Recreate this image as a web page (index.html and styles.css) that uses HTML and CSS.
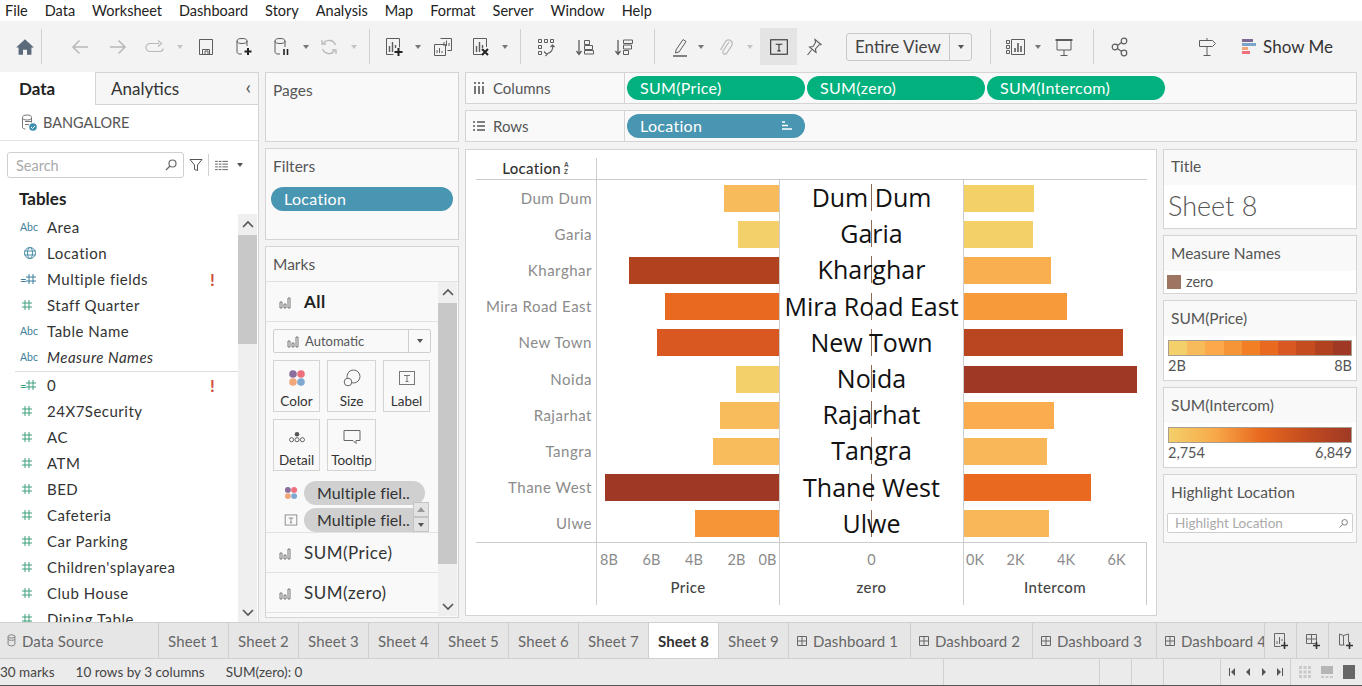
FILE: index.html
```html
<!DOCTYPE html>
<html lang="en">
<head>
  <meta charset="UTF-8">
  <title>Tableau - Sheet 8</title>
  <link rel="stylesheet" href="styles.css">
</head>
<body>
  <!-- shared icons -->
  <svg class="sprite" xmlns="http://www.w3.org/2000/svg">
    <symbol id="i-bars" viewBox="0 0 14 14"><path d="M2 7h2v6H2zM6 9h2v4H6zM10 3h2v10h-2z" fill="none" stroke="currentColor"/></symbol>
    <symbol id="i-hash" viewBox="0 0 14 14"><path d="M5 2v10M9 2v10M2 5h10M2 9h10" stroke="currentColor" fill="none"/></symbol>
    <symbol id="i-search" viewBox="0 0 14 14"><circle cx="8.500" cy="5.500" r="3.500" fill="none" stroke="currentColor" stroke-width="1.200"/><path d="M6 8l-4 4" stroke="currentColor" stroke-width="1.200"/></symbol>
    <symbol id="i-dots" viewBox="0 0 18 18"><circle cx="5" cy="5" r="3.800" fill="#8a6f9c"/><circle cx="13" cy="5" r="3.800" fill="#ef6f7d"/><circle cx="5" cy="13" r="3.800" fill="#f2a77a"/><circle cx="13" cy="13" r="3.800" fill="#7fa8d1"/></symbol>
    <symbol id="i-text" viewBox="0 0 18 18"><rect x="1.500" y="2.500" width="15" height="13" fill="none" stroke="currentColor"/><path d="M6 6.500h6M9 6.500v6M7.500 12.500h3" stroke="currentColor" fill="none"/></symbol>
    <symbol id="i-up" viewBox="0 0 14 14"><path d="M2 9l5-5 5 5" fill="none" stroke="currentColor" stroke-width="1.600"/></symbol>
    <symbol id="i-down" viewBox="0 0 14 14"><path d="M2 5l5 5 5-5" fill="none" stroke="currentColor" stroke-width="1.600"/></symbol>
    <symbol id="i-dash" viewBox="0 0 12 12"><path d="M1.500 1.500h9v9h-9zM6 1.500v9M1.500 6h9" fill="none" stroke="currentColor"/></symbol>
  </svg>

  <nav class="menu">
    <span>File</span><span>Data</span><span>Worksheet</span><span>Dashboard</span><span>Story</span><span>Analysis</span><span>Map</span><span>Format</span><span>Server</span><span>Window</span><span>Help</span>
  </nav>

  <div class="toolbar">
    <button class="tool w32 home"><svg viewBox="0 0 18 18"><path d="M1 9.500L9 2l8 7.500h-2.200V16h-4v-4.500H7.200V16h-4V9.500z" fill="#5b6b7c"/></svg></button>
    <i class="sep mr19"></i>
    <button class="tool off"><svg viewBox="0 0 20 20"><path d="M18 10H3M9.500 3.500L3 10l6.500 6.500" fill="none" stroke="currentColor" stroke-width="1.500"/></svg></button>
    <button class="tool off"><svg viewBox="0 0 20 20"><path d="M2 10h15M10.500 3.500L17 10l-6.500 6.500" fill="none" stroke="currentColor" stroke-width="1.500"/></svg></button>
    <button class="tool w36 off"><svg viewBox="0 0 20 20"><path d="M14 6.500H5a3 3 0 0 0 0 8h10a3 3 0 0 0 3-3M13 3.500l3.500 3-3.500 3" fill="none" stroke="currentColor" stroke-width="1.200"/></svg></button>
    <i class="caret off mx2"></i>
    <button class="tool"><svg viewBox="0 0 20 20"><path d="M3.500 2.500h13v15h-13zM6.500 17.500v-5h7v5M9 14h3v3.500H9z" fill="none" stroke="currentColor"/></svg></button>
    <button class="tool"><svg viewBox="0 0 20 20"><ellipse cx="8" cy="4" rx="5" ry="2.500" fill="none" stroke="currentColor"/><path d="M3 4v11c0 1 1 2 3 2h2M13 4v5" fill="none" stroke="currentColor"/><path d="M14 11v7M10.500 14.500h7" stroke="#222" stroke-width="2"/></svg></button>
    <button class="tool"><svg viewBox="0 0 20 20"><ellipse cx="8" cy="4" rx="5" ry="2.500" fill="none" stroke="currentColor"/><path d="M3 4v11c0 1 1 2 3 2h2M13 4v6" fill="none" stroke="currentColor"/><path d="M12 12v6M15.500 12v6" stroke="#222" stroke-width="1.600"/></svg></button>
    <i class="caret"></i>
    <button class="tool w36 off"><svg viewBox="0 0 20 20"><path d="M16.500 8A7 7 0 0 0 4.500 6M3.500 12a7 7 0 0 0 12 2" fill="none" stroke="currentColor" stroke-width="1.300"/><path d="M3 3v4h4M17 17v-4h-4" fill="none" stroke="currentColor" stroke-width="1.300"/></svg></button>
    <i class="caret off mx2"></i>
    <i class="sep ml8 mr5"></i>
    <button class="tool"><svg viewBox="0 0 20 20"><path d="M2.500 1.500h13v9M2.500 1.500v16h7" fill="none" stroke="currentColor"/><path d="M5.500 9v6M8.500 5v10M11.500 8v3" stroke="currentColor" stroke-width="1.400"/><path d="M14.500 11v8M10.500 15h8" stroke="#222" stroke-width="2"/></svg></button>
    <i class="caret"></i>
    <button class="tool ml1"><svg viewBox="0 0 20 20"><path d="M7.500 1.500h11v12h-4M1.500 7.500h11v11h-11z" fill="#f3f3f3" stroke="currentColor"/><path d="M11 9V5M13.500 9V3.500M16 9V6M4 16v-3M6.500 16v-5M9 16v-2" stroke="currentColor"/></svg></button>
    <button class="tool"><svg viewBox="0 0 20 20"><path d="M11 17.500H2.500v-16h13V10" fill="none" stroke="currentColor"/><path d="M5.500 9v6M8.500 5v10M11.500 8v3" stroke="currentColor" stroke-width="1.400"/><path d="M11 12l6 6M17 12l-6 6" stroke="#222" stroke-width="2"/></svg></button>
    <i class="caret"></i>
    <i class="sep ml10 mr6"></i>
    <button class="tool"><svg viewBox="0 0 20 20"><path d="M2.500 2.500h3v3h-3zM8.500 2.500h3v3h-3zM14.500 2.500h3v3h-3zM2.500 8.500h3v3h-3zM2.500 14.500h3v3h-3z" fill="none" stroke="currentColor"/><path d="M16.500 8c1 4-1 8-6 9M8 14.500l3 3-1.500 1.500M14.500 10l2-2 2 2" fill="none" stroke="currentColor" stroke-width="1.100"/></svg></button>
    <button class="tool ml1"><svg viewBox="0 0 20 20"><path d="M4 3v14M1.500 14l2.500 3.500L6.500 14" fill="none" stroke="currentColor" stroke-width="1.300"/><path d="M9.500 3.500h5v4h-5zM9.500 8.500h8v4h-8zM9.500 13.500h9v3.500h-9z" fill="none" stroke="currentColor"/></svg></button>
    <button class="tool ml1"><svg viewBox="0 0 20 20"><path d="M4 3v14M1.500 14l2.500 3.500L6.500 14" fill="none" stroke="currentColor" stroke-width="1.300"/><path d="M9.500 3h9v3.500h-9zM9.500 8h8v4h-8zM9.500 13.500h5v4h-5z" fill="none" stroke="currentColor"/></svg></button>
    <i class="sep ml11"></i>
    <button class="tool w32 ml9"><svg viewBox="0 0 20 20"><path d="M6 13L13 2.500l3 2L9 15l-3.500 1z" fill="none" stroke="currentColor"/><path d="M3 19h14" stroke="currentColor" stroke-width="1.500"/></svg></button>
    <i class="caret"></i>
    <button class="tool off ml1"><svg viewBox="0 0 20 20"><path d="M13 5l-6 9a2.200 2.200 0 0 0 3.500 2.500L16 8a3.700 3.700 0 0 0-6-4l-5.500 9" fill="none" stroke="currentColor" stroke-width="1.200"/></svg></button>
    <i class="caret off"></i>
    <button class="tool w37 active ml5"><svg viewBox="0 0 18 18"><use href="#i-text"/></svg></button>
    <button class="tool w34"><svg viewBox="0 0 20 20"><path d="M11 2.500l6 5-2 .5-3.500 4 .5 3.500L5.500 10l3.500-.5 2.500-4zM7.500 13L3.500 18" fill="none" stroke="currentColor" stroke-width="1.100"/></svg></button>
    <div class="fit-select"><span class="fit-value">Entire View</span><span class="fit-arrow"><i class="caret dark"></i></span></div>
    <i class="sep ml18 mr6"></i>
    <button class="tool w36"><svg viewBox="0 0 20 20"><path d="M1.500 3.500h3v3h-3zM1.500 8.500h3v3h-3zM1.500 13.500h3v3h-3zM6.500 2.500h13v15h-13z" fill="none" stroke="currentColor"/><path d="M10 15v-4M13 15V6M16 15v-6" stroke="currentColor" stroke-width="1.600"/></svg></button>
    <i class="caret"></i>
    <button class="tool ml2"><svg viewBox="0 0 20 20"><path d="M1.500 3h17" stroke="currentColor" stroke-width="2"/><path d="M3 3.500v9.500h14V3.500M10 13v5M6.500 18.500h7" fill="none" stroke="currentColor"/></svg></button>
    <i class="sep ml10 mr7"></i>
    <button class="tool"><svg viewBox="0 0 20 20"><circle cx="14" cy="4" r="2.800" fill="none" stroke="currentColor" stroke-width="1.200"/><circle cx="5" cy="10" r="2.800" fill="none" stroke="currentColor" stroke-width="1.200"/><circle cx="14" cy="16" r="2.800" fill="none" stroke="currentColor" stroke-width="1.200"/><path d="M11.600 5.500l-4.200 3M7.400 11.500l4.200 3" stroke="currentColor" stroke-width="1.200"/></svg></button>
    <div class="toolbar-right">
      <button class="tool"><svg viewBox="0 0 20 20"><path d="M2.500 3.500h13l3 3-3 3h-13zM10 1v2.500M10 9.500V18M6.500 18.500h7" fill="none" stroke="currentColor"/></svg></button>
      <div class="show-me">
        <svg viewBox="0 0 14 16"><path d="M0 0h11v3H0z" fill="#7f6a96"/><path d="M0 4h14v3H0z" fill="#7aa5c9"/><path d="M0 8h6v3H0z" fill="#f2a77a"/><path d="M0 12h8v3H0z" fill="#ef6f7d"/></svg>
        <span>Show Me</span>
      </div>
    </div>
  </div>

  <main class="workspace">
    <!-- data pane -->
    <aside class="data-pane">
      <div class="pane-tabs">
        <div class="pane-tab current">Data</div>
        <div class="pane-tab">Analytics<span class="collapse">&#8249;</span></div>
      </div>
      <div class="source">
        <svg viewBox="0 0 18 18"><ellipse cx="7" cy="3.500" rx="4.500" ry="2.500" fill="none" stroke="#777"/><path d="M2.500 3.500V13c0 1 1 2 3 2M11.500 3.500v5M5 7.500h6M5 10.500h4" fill="none" stroke="#777"/><circle cx="13" cy="13" r="3.800" fill="#3f8fb3"/><path d="M11 13l1.500 1.500L15 12" stroke="#fff" fill="none"/></svg>
        <span>BANGALORE</span>
      </div>
      <div class="search-row">
        <div class="search-box"><span>Search</span><svg class="ico14"><use href="#i-search"/></svg></div>
        <svg class="funnel" viewBox="0 0 14 14"><path d="M1 1.500h12L8.500 7v5.500l-3-1V7z" fill="none" stroke="#555"/></svg>
        <i class="sep small"></i>
        <svg class="list-ico" viewBox="0 0 14 12"><path d="M0 1.500h3M4 1.500h3M8 1.500h6M0 4.500h3M4 4.500h3M8 4.500h6M0 7.500h3M4 7.500h3M8 7.500h6M0 10.500h3M4 10.500h3M8 10.500h6" stroke="#555"/></svg>
        <i class="caret dark"></i>
      </div>
      <h2 class="tables-title">Tables</h2>
      <div class="fields-wrap">
        <ul class="fields">
          <li><span class="ftype abc">Abc</span>Area</li>
          <li><span class="ftype geo"><svg viewBox="0 0 14 14"><circle cx="7" cy="7" r="5.500" fill="none" stroke="currentColor"/><ellipse cx="7" cy="7" rx="2.500" ry="5.500" fill="none" stroke="currentColor"/><path d="M1.500 5h11M1.500 9h11" stroke="currentColor"/></svg></span>Location</li>
          <li><span class="ftype calc"><em>=</em><svg class="ico14"><use href="#i-hash"/></svg></span>Multiple fields<b class="warn">!</b></li>
          <li><span class="ftype num"><svg class="ico14"><use href="#i-hash"/></svg></span>Staff Quarter</li>
          <li><span class="ftype abc">Abc</span>Table Name</li>
          <li class="gen"><span class="ftype abc">Abc</span>Measure Names</li>
          <li class="first-measure"><span class="ftype num"><em>=</em><svg class="ico14"><use href="#i-hash"/></svg></span>0<b class="warn">!</b></li>
          <li><span class="ftype num"><svg class="ico14"><use href="#i-hash"/></svg></span>24X7Security</li>
          <li><span class="ftype num"><svg class="ico14"><use href="#i-hash"/></svg></span>AC</li>
          <li><span class="ftype num"><svg class="ico14"><use href="#i-hash"/></svg></span>ATM</li>
          <li><span class="ftype num"><svg class="ico14"><use href="#i-hash"/></svg></span>BED</li>
          <li><span class="ftype num"><svg class="ico14"><use href="#i-hash"/></svg></span>Cafeteria</li>
          <li><span class="ftype num"><svg class="ico14"><use href="#i-hash"/></svg></span>Car Parking</li>
          <li><span class="ftype num"><svg class="ico14"><use href="#i-hash"/></svg></span>Children'splayarea</li>
          <li><span class="ftype num"><svg class="ico14"><use href="#i-hash"/></svg></span>Club House</li>
          <li><span class="ftype num"><svg class="ico14"><use href="#i-hash"/></svg></span>Dining Table</li>
        </ul>
        <div class="scrollbar">
          <span class="sb-btn"><svg class="ico14"><use href="#i-up"/></svg></span>
          <div class="sb-track"><div class="sb-thumb fields-thumb"></div></div>
          <span class="sb-btn"><svg class="ico14"><use href="#i-down"/></svg></span>
        </div>
      </div>
    </aside>

    <!-- pages, filters, marks -->
    <section class="cards-col">
      <div class="card pages-card"><div class="card-title">Pages</div></div>
      <div class="card filters-card">
        <div class="card-title">Filters</div>
        <div class="pill blue filter-pill">Location</div>
      </div>
      <div class="card marks-card">
        <div class="card-title marks-title">Marks</div>
        <div class="marks-body">
          <div class="marks-content">
            <div class="mark-row all"><svg class="ico14 grey"><use href="#i-bars"/></svg><strong>All</strong></div>
            <div class="mark-type">
              <div class="mark-select"><svg class="ico14 grey"><use href="#i-bars"/></svg><span>Automatic</span><span class="select-arrow"><i class="caret dark"></i></span></div>
            </div>
            <div class="mark-btns">
              <div class="mark-btn w47"><svg class="ico18"><use href="#i-dots"/></svg><span>Color</span></div>
              <div class="mark-btn w49"><svg class="ico18" viewBox="0 0 18 18"><circle cx="10.500" cy="7.500" r="6.500" fill="none" stroke="#666"/><circle cx="5" cy="13" r="3.800" fill="#fafafa" stroke="#666"/></svg><span>Size</span></div>
              <div class="mark-btn w47"><svg class="ico18 grey"><use href="#i-text"/></svg><span>Label</span></div>
              <div class="mark-btn w47"><svg class="ico18" viewBox="0 0 20 18"><circle cx="10" cy="6" r="2.500" fill="#555"/><circle cx="4" cy="12" r="2.300" fill="none" stroke="#555"/><circle cx="10" cy="12" r="2.300" fill="none" stroke="#555"/><circle cx="16" cy="12" r="2.300" fill="none" stroke="#555"/></svg><span>Detail</span></div>
              <div class="mark-btn w49"><svg class="ico18" viewBox="0 0 18 18"><path d="M1 2.500h16v10h-4v3l-3-3H1z" fill="none" stroke="#666"/></svg><span>Tooltip</span></div>
            </div>
            <div class="mark-pills">
              <div class="mark-pill-row"><svg class="ico14"><use href="#i-dots"/></svg><span class="pill grey-pill">Multiple fiel..</span></div>
              <div class="mark-pill-row"><svg class="ico14 grey"><use href="#i-text"/></svg><span class="pill grey-pill">Multiple fiel..</span></div>
              <div class="mini-scroll"><span class="mini-btn"><i class="caret-up"></i></span><span class="mini-btn"><i class="caret dark"></i></span></div>
            </div>
            <div class="mark-row"><svg class="ico14 grey"><use href="#i-bars"/></svg><span>SUM(Price)</span></div>
            <div class="mark-row"><svg class="ico14 grey"><use href="#i-bars"/></svg><span>SUM(zero)</span></div>
          </div>
          <div class="scrollbar">
            <span class="sb-btn"><svg class="ico14"><use href="#i-up"/></svg></span>
            <div class="sb-track"><div class="sb-thumb marks-thumb"></div></div>
            <span class="sb-btn"><svg class="ico14"><use href="#i-down"/></svg></span>
          </div>
        </div>
      </div>
    </section>

    <!-- shelves and view -->
    <section class="view-col">
      <div class="shelf">
        <div class="shelf-label"><svg viewBox="0 0 12 12"><path d="M2 4v8M6 4v8M10 4v8M2 0v2M6 0v2M10 0v2" stroke="#555" stroke-width="1.600"/></svg>Columns</div>
        <div class="shelf-pills">
          <div class="pill green">SUM(Price)</div>
          <div class="pill green">SUM(zero)</div>
          <div class="pill green">SUM(Intercom)</div>
        </div>
      </div>
      <div class="shelf">
        <div class="shelf-label"><svg viewBox="0 0 12 12"><path d="M0 2h2M4 2h8M0 6h2M4 6h8M0 10h2M4 10h8" stroke="#555" stroke-width="1.600"/></svg>Rows</div>
        <div class="shelf-pills">
          <div class="pill blue">Location<svg class="sort-ico" viewBox="0 0 12 10"><path d="M1 1h3M1 4.500h6M1 8h10" stroke="#fff" stroke-width="1.600"/></svg></div>
        </div>
      </div>

      <div class="view-body">
        <div class="chart-card">
          <div class="chart">
            <div class="chart-head">
              <div class="head-label">Location<svg viewBox="0 0 8 12"><text x="1" y="5" font-size="6.500" font-weight="700" fill="#555" font-family="Liberation Sans">A</text><text x="1" y="11.500" font-size="6.500" font-weight="700" fill="#555" font-family="Liberation Sans">Z</text></svg></div>
              <div class="head-empty"></div>
            </div>

            <div class="chart-row"><div class="row-label">Dum Dum</div><div class="pane price"><div class="bar" style="width:55px;background:#f8bb5c"></div></div><div class="pane zero"><span>Dum Dum</span></div><div class="pane intercom"><div class="bar" style="width:70px;background:#f4d166"></div></div></div>
            <div class="chart-row"><div class="row-label">Garia</div><div class="pane price"><div class="bar" style="width:41px;background:#f3d06a"></div></div><div class="pane zero"><span>Garia</span></div><div class="pane intercom"><div class="bar" style="width:69px;background:#f4d166"></div></div></div>
            <div class="chart-row"><div class="row-label">Kharghar</div><div class="pane price"><div class="bar" style="width:150px;background:#b04220"></div></div><div class="pane zero"><span>Kharghar</span></div><div class="pane intercom"><div class="bar" style="width:87px;background:#f9ae50"></div></div></div>
            <div class="chart-row"><div class="row-label">Mira Road East</div><div class="pane price"><div class="bar" style="width:114px;background:#e8691f"></div></div><div class="pane zero"><span>Mira Road East</span></div><div class="pane intercom"><div class="bar" style="width:103px;background:#f79a3a"></div></div></div>
            <div class="chart-row"><div class="row-label">New Town</div><div class="pane price"><div class="bar" style="width:122px;background:#d95821"></div></div><div class="pane zero"><span>New Town</span></div><div class="pane intercom"><div class="bar" style="width:159px;background:#ba4521"></div></div></div>
            <div class="chart-row"><div class="row-label">Noida</div><div class="pane price"><div class="bar" style="width:43px;background:#f3d06a"></div></div><div class="pane zero"><span>Noida</span></div><div class="pane intercom"><div class="bar" style="width:173px;background:#9f3925"></div></div></div>
            <div class="chart-row"><div class="row-label">Rajarhat</div><div class="pane price"><div class="bar" style="width:59px;background:#f9bc5d"></div></div><div class="pane zero"><span>Rajarhat</span></div><div class="pane intercom"><div class="bar" style="width:90px;background:#fbac4e"></div></div></div>
            <div class="chart-row"><div class="row-label">Tangra</div><div class="pane price"><div class="bar" style="width:66px;background:#f9bc5d"></div></div><div class="pane zero"><span>Tangra</span></div><div class="pane intercom"><div class="bar" style="width:83px;background:#f8b85a"></div></div></div>
            <div class="chart-row"><div class="row-label">Thane West</div><div class="pane price"><div class="bar" style="width:174px;background:#9f3925"></div></div><div class="pane zero"><span>Thane West</span></div><div class="pane intercom"><div class="bar" style="width:127px;background:#e8691f"></div></div></div>
            <div class="chart-row"><div class="row-label">Ulwe</div><div class="pane price"><div class="bar" style="width:84px;background:#f69537"></div></div><div class="pane zero"><span>Ulwe</span></div><div class="pane intercom"><div class="bar" style="width:85px;background:#f8b85a"></div></div></div>

            <div class="chart-axis">
              <div class="axis-blank"></div>
              <div class="axis">
                <div class="ticks ticks-price"><span class="tick">8B</span><span class="tick">6B</span><span class="tick">4B</span><span class="tick">2B</span><span class="tick">0B</span></div>
                <div class="axis-title">Price</div>
              </div>
              <div class="axis">
                <div class="ticks ticks-zero"><span class="tick">0</span></div>
                <div class="axis-title">zero</div>
              </div>
              <div class="axis last">
                <div class="ticks ticks-intercom"><span class="tick">0K</span><span class="tick">2K</span><span class="tick">4K</span><span class="tick">6K</span></div>
                <div class="axis-title">Intercom</div>
              </div>
            </div>
          </div>
        </div>

        <aside class="legends">
          <div class="legend title-card">
            <div class="legend-head">Title</div>
            <div class="sheet-title">Sheet 8</div>
          </div>
          <div class="legend names-card">
            <div class="legend-head">Measure Names</div>
            <div class="swatch-row"><i class="swatch"></i><span>zero</span></div>
          </div>
          <div class="legend ramp-card">
            <div class="legend-head">SUM(Price)</div>
            <div class="ramp-wrap">
              <div class="ramp steps"><i style="background:#f3d06a"></i><i style="background:#f8bb5c"></i><i style="background:#fba94b"></i><i style="background:#f69537"></i><i style="background:#f37f25"></i><i style="background:#e8691f"></i><i style="background:#d95821"></i><i style="background:#c44c1f"></i><i style="background:#b04220"></i><i style="background:#9f3925"></i></div>
              <div class="ramp-labels"><span>2B</span><span>8B</span></div>
            </div>
          </div>
          <div class="legend ramp-card">
            <div class="legend-head">SUM(Intercom)</div>
            <div class="ramp-wrap">
              <div class="ramp smooth"></div>
              <div class="ramp-labels"><span>2,754</span><span>6,849</span></div>
            </div>
          </div>
          <div class="legend highlight-card">
            <div class="legend-head">Highlight Location</div>
            <div class="highlight-box"><span>Highlight Location</span><svg class="ico11"><use href="#i-search"/></svg></div>
          </div>
        </aside>
      </div>
    </section>
  </main>

  <div class="tabs">
    <div class="tab source-tab"><svg viewBox="0 0 10 14"><ellipse cx="5" cy="2.500" rx="3.800" ry="1.800" fill="none" stroke="#777"/><path d="M1.200 2.500v8.500c0 1 1.500 2 3.800 2s3.800-1 3.800-2V2.500M1.200 6c1 1 6.600 1 7.600 0" fill="none" stroke="#777"/></svg>Data Source</div>
    <div class="tab sheet">Sheet 1</div>
    <div class="tab sheet">Sheet 2</div>
    <div class="tab sheet">Sheet 3</div>
    <div class="tab sheet">Sheet 4</div>
    <div class="tab sheet">Sheet 5</div>
    <div class="tab sheet">Sheet 6</div>
    <div class="tab sheet">Sheet 7</div>
    <div class="tab sheet current">Sheet 8</div>
    <div class="tab sheet">Sheet 9</div>
    <div class="tab dash"><svg class="ico12"><use href="#i-dash"/></svg>Dashboard 1</div>
    <div class="tab dash"><svg class="ico12"><use href="#i-dash"/></svg>Dashboard 2</div>
    <div class="tab dash wide"><svg class="ico12"><use href="#i-dash"/></svg>Dashboard 3</div>
    <div class="tab dash cut"><svg class="ico12"><use href="#i-dash"/></svg>Dashboard 4</div>
    <div class="tab add"><svg viewBox="0 0 18 18"><path d="M2.500 1.500h10v9M2.500 1.500v13h6" fill="none" stroke="#666"/><path d="M5 9v3M7.500 5v7M10 7v2" stroke="#666"/><path d="M12.500 10v7M9 13.500h7" stroke="#333" stroke-width="1.600"/></svg></div>
    <div class="tab add"><svg viewBox="0 0 18 18"><path d="M2.500 2.500h10v9h-10zM7.500 2.500v9M2.500 7h10" fill="none" stroke="#666"/><path d="M12.500 10v7M9 13.500h7" stroke="#333" stroke-width="1.600"/></svg></div>
    <div class="tab add last"><svg viewBox="0 0 18 18"><path d="M2.500 2l4 1.500 5-1.500v8M2.500 2v11h5M6.500 3.500V13" fill="none" stroke="#666"/><path d="M12.500 10v7M9 13.500h7" stroke="#333" stroke-width="1.600"/></svg></div>
  </div>

  <footer class="status">
    <div class="status-text"><span>30 marks</span><span>10 rows by 3 columns</span><span>SUM(zero): 0</span></div>
    <div class="status-cell c1"></div>
    <div class="status-cell c2"></div>
    <div class="status-cell c3"></div>
    <div class="status-cell c4"></div>
    <div class="status-cell nav">
      <svg viewBox="0 0 8 8"><path d="M1 0h1v8H1zM7 0v8L3 4z" fill="#555"/></svg>
      <svg viewBox="0 0 8 8"><path d="M6 0v8L2 4z" fill="#555"/></svg>
      <svg viewBox="0 0 8 8"><path d="M2 0v8l4-4z" fill="#555"/></svg>
      <svg viewBox="0 0 8 8"><path d="M1 0v8l4-4zM6 0h1v8H6z" fill="#555"/></svg>
    </div>
    <div class="status-cell views">
      <svg viewBox="0 0 12 14"><path d="M0 1h3v3H0zM4.500 1h3v3h-3zM9 1h3v3H9zM0 5.500h3v3H0zM4.500 5.500h3v3h-3zM9 5.500h3v3H9zM0 10h3v3H0zM4.500 10h3v3h-3zM9 10h3v3H9z" fill="#c9c9c9"/></svg>
      <svg viewBox="0 0 12 14"><path d="M0 1h12v8H0z" fill="#b5b5b5"/><path d="M0 11h3v2H0zM4.500 11h3v2h-3zM9 11h3v2H9z" fill="#c9c9c9"/></svg>
      <svg viewBox="0 0 12 14"><path d="M0 0h12v14H0z" fill="#666"/></svg>
    </div>
  </footer>
</body>
</html>
```

FILE: styles.css
```css
/* Tableau desktop window */
* {
  box-sizing: border-box;
}
html, body {
  margin: 0;
  padding: 0;
  height: 686px;
  overflow: hidden;
}
body {
  font-family: Lato, "Liberation Sans", sans-serif;
  font-size: 15px;
  color: #333;
  background-color: #f3f3f3;
}
.sprite {
  display: none;
}
button {
  border: none;
  background: none;
  padding: 0;
  font: inherit;
}
svg {
  display: block;
}
.ico11 { width: 11px; height: 11px; color: #777; flex: none; }
.ico12 { width: 12px; height: 12px; color: #666; flex: none; }
.ico14 { width: 14px; height: 14px; flex: none; }
.ico18 { width: 18px; height: 18px; flex: none; }
.grey { color: #777; }

/* menu */
.menu {
  display: flex;
  gap: 17px;
  height: 21px;
  padding-left: 5px;
  align-items: center;
  background-color: #fff;
  color: #222;
  font-size: 14.500px;
}

/* toolbar */
.toolbar {
  display: flex;
  align-items: center;
  height: 51px;
  padding-left: 9px;
}
.tool {
  width: 38px;
  height: 37px;
  flex: none;
  display: flex;
  align-items: center;
  justify-content: center;
  color: #5d5d5d;
}
.tool svg {
  width: 20px;
  height: 20px;
}
.tool.off { color: #b9b9b9; }
.tool.home { width: 32px; }
.tool.active { background-color: #e4e4e4; color: #333; }
.w32 { width: 32px; }
.w34 { width: 34px; }
.w36 { width: 36px; }
.w37 { width: 37px; }
.mx2 { margin: 0 2px; }
.ml1 { margin-left: 1px; }
.ml2 { margin-left: 2px; }
.ml5 { margin-left: 5px; }
.ml8 { margin-left: 8px; }
.ml9 { margin-left: 9px; }
.ml10 { margin-left: 10px; }
.ml11 { margin-left: 11px; }
.ml18 { margin-left: 18px; }
.mr5 { margin-right: 5px; }
.mr6 { margin-right: 6px; }
.mr7 { margin-right: 7px; }
.mr19 { margin-right: 19px; }
.sep {
  width: 1px;
  height: 35px;
  flex: none;
  background-color: #d0d0d0;
}
.sep.small {
  height: 22px;
}
.caret {
  width: 10px;
  height: 10px;
  flex: none;
  position: relative;
  display: block;
}
.caret::after {
  content: "";
  position: absolute;
  left: 2px;
  top: 3px;
  border-left: 3px solid transparent;
  border-right: 3px solid transparent;
  border-top: 4px solid #777;
}
.caret.off::after { border-top-color: #c4c4c4; }
.caret.dark::after { border-top-color: #555; }
.caret-up {
  width: 0;
  height: 0;
  border-left: 4px solid transparent;
  border-right: 4px solid transparent;
  border-bottom: 5px solid #999;
}
.fit-select {
  width: 126px;
  height: 28px;
  flex: none;
  margin-left: 15px;
  display: flex;
  align-items: center;
  border: 1px solid #c8c8c8;
  border-radius: 3px;
  color: #444;
  font-size: 17px;
}
.fit-value {
  flex: 1;
  padding-left: 8px;
  white-space: nowrap;
}
.fit-arrow {
  width: 22px;
  height: 100%;
  border-left: 1px solid #c8c8c8;
  display: flex;
  align-items: center;
  justify-content: center;
}
.toolbar-right {
  margin-left: auto;
  display: flex;
  align-items: center;
  padding-right: 29px;
}
.show-me {
  display: flex;
  align-items: center;
  gap: 7px;
  margin-left: 16px;
  font-size: 17px;
  color: #333;
}
.show-me svg {
  width: 14px;
  height: 16px;
}

/* workspace */
.workspace {
  height: 550px;
  display: grid;
  grid-template-columns: 259px 194px 892px;
  column-gap: 6px;
  align-items: start;
}

/* data pane */
.data-pane {
  height: 550px;
  background-color: #fff;
  border-right: 1px solid #d4d4d4;
  overflow: hidden;
}
.pane-tabs {
  display: flex;
  height: 33px;
}
.pane-tab {
  flex: 1;
  display: flex;
  align-items: center;
  padding-left: 15px;
  font-size: 17px;
  background-color: #f6f6f6;
  border-top: 1px solid #d4d4d4;
  border-bottom: 1px solid #d4d4d4;
  border-left: 1px solid #d4d4d4;
  position: relative;
}
.pane-tab.current {
  flex: none;
  width: 95px;
  padding-left: 19px;
  background-color: #fff;
  border: none;
  font-weight: 700;
  color: #222;
}
.collapse {
  margin-left: auto;
  padding: 0 7px 5px 0;
  font-size: 20px;
  color: #555;
  line-height: 1;
}
.source {
  height: 36px;
  padding: 0 0 0 20px;
  display: flex;
  align-items: center;
  gap: 5px;
  border-bottom: 1px solid #e4e4e4;
  color: #555;
  font-size: 14.500px;
}
.source svg {
  width: 18px;
  height: 18px;
}
.search-row {
  display: flex;
  align-items: center;
  margin-top: 11px;
  padding-left: 7px;
}
.search-box {
  width: 177px;
  height: 26px;
  border: 1px solid #cfcfcf;
  border-radius: 3px;
  display: flex;
  align-items: center;
  justify-content: space-between;
  padding: 0 5px 0 8px;
  color: #aaa;
  font-size: 14.500px;
}
.search-box svg {
  color: #666;
}
.funnel {
  width: 14px;
  height: 14px;
  margin-left: 5px;
}
.search-row .sep {
  margin-left: 5px;
}
.list-ico {
  width: 13px;
  height: 11px;
  margin-left: 6px;
}
.search-row .caret {
  margin-left: 7px;
}
.tables-title {
  margin: 10px 0 0 19px;
  height: 26px;
  font-size: 17px;
  font-weight: 700;
  color: #222;
  line-height: 22px;
}
.fields-wrap {
  display: grid;
  grid-template-columns: 238px 19px;
  height: 408px;
}
.fields {
  list-style: none;
  margin: 0;
  padding: 0;
  overflow: hidden;
}
.fields li {
  height: 26px;
  display: flex;
  align-items: center;
  font-size: 15px;
  letter-spacing: .5px;
  color: #333;
  white-space: nowrap;
  position: relative;
}
.fields li.gen {
  font-style: italic;
}
.fields li.first-measure {
  margin-top: 1px;
  height: 27px;
  border-top: 1px solid #ddd;
  margin-left: 15px;
}
.first-measure .ftype {
  width: 32px;
  padding-left: 5px;
}
.ftype {
  width: 47px;
  padding-left: 20px;
  flex: none;
  display: flex;
  align-items: center;
  font-size: 10.500px;
  font-style: normal;
  letter-spacing: 0;
}
.ftype em {
  font-style: normal;
  font-size: 11px;
  margin-right: -2px;
}
.abc { color: #3d7e9b; }
.geo { color: #4d8da8; }
.geo svg { width: 14px; height: 14px; margin-left: 3px; }
.num { color: #3f9e7a; }
.calc { color: #3d7e9b; }
.warn {
  color: #cf4f3e;
  font-size: 17px;
  font-weight: 700;
  position: absolute;
  left: 210px;
}
.first-measure .warn {
  left: 195px;
}
.scrollbar {
  display: flex;
  flex-direction: column;
  background-color: #efefef;
  color: #555;
}
.sb-btn {
  height: 21px;
  flex: none;
  display: flex;
  align-items: center;
  justify-content: center;
}
.sb-track {
  flex: 1;
}
.sb-thumb {
  background-color: #c8c8c8;
}
.fields-thumb {
  height: 109px;
}
.marks-thumb {
  height: 261px;
}

/* pages, filters, marks */
.cards-col {
  display: flex;
  flex-direction: column;
  gap: 6px;
}
.card {
  border: 1px solid #d4d4d4;
  background-color: #f9f9f9;
}
.card-title {
  padding: 8px 0 0 7px;
  font-size: 15.500px;
  color: #555;
}
.pages-card { height: 70px; }
.filters-card { height: 92px; }
.filter-pill {
  margin: 12px 5px 0;
}
.marks-card { height: 372px; }
.marks-title {
  height: 35px;
  border-bottom: 1px solid #e2e2e2;
}
.marks-body {
  display: grid;
  grid-template-columns: 172px 19px;
  height: 334px;
}
.marks-content {
  overflow: hidden;
}
.mark-row {
  height: 40px;
  display: flex;
  align-items: center;
  gap: 12px;
  padding-left: 12px;
  border-bottom: 1px solid #e2e2e2;
  font-size: 17px;
  letter-spacing: .5px;
  color: #333;
}
.mark-row.all strong {
  color: #222;
}
.mark-type {
  padding: 7px 7px 0;
}
.mark-select {
  height: 24px;
  border: 1px solid #cfcfcf;
  border-radius: 2px;
  display: flex;
  align-items: center;
  gap: 5px;
  padding-left: 12px;
  font-size: 13px;
  color: #555;
}
.mark-select .select-arrow {
  margin-left: auto;
  width: 22px;
  height: 100%;
  border-left: 1px solid #cfcfcf;
  display: flex;
  align-items: center;
  justify-content: center;
}
.mark-btns {
  display: flex;
  flex-wrap: wrap;
  gap: 7px;
  padding: 7px 0 0 7px;
  width: 170px;
}
.mark-btn {
  height: 52px;
  border: 1px solid #d4d4d4;
  display: flex;
  flex-direction: column;
  align-items: center;
  justify-content: flex-end;
  gap: 6px;
  padding-bottom: 2px;
  font-size: 13.500px;
  color: #333;
}
.w47 { width: 47px; }
.w49 { width: 49px; }
.mark-pills {
  position: relative;
  display: flex;
  flex-direction: column;
  gap: 3px;
  padding-top: 10px;
  border-bottom: 1px solid #e2e2e2;
}
.mark-pill-row {
  display: flex;
  align-items: center;
  height: 24px;
  padding-left: 18px;
  gap: 6px;
}
.pill.grey-pill {
  width: 121px;
  flex: none;
  background-color: #d0d0d0;
  color: #333;
  letter-spacing: .1px;
}
.mini-scroll {
  position: absolute;
  right: 9px;
  bottom: 0;
  width: 16px;
  display: flex;
  flex-direction: column;
}
.mini-btn {
  height: 15px;
  background-color: #e3e3e3;
  border: 1px solid #c4c4c4;
  display: flex;
  align-items: center;
  justify-content: center;
}

/* shared pills */
.pill {
  height: 24px;
  border-radius: 12px;
  display: flex;
  align-items: center;
  color: #fff;
  padding: 0 0 1px 13px;
  font-size: 16px;
  letter-spacing: .3px;
  white-space: nowrap;
}
.green { background-color: #02b17e; }
.blue { background-color: #4996b2; }
.sort-ico {
  width: 12px;
  height: 10px;
  margin-left: auto;
  margin-right: 12px;
}

/* shelves */
.view-col {
  display: flex;
  flex-direction: column;
  gap: 6px;
}
.shelf {
  height: 32px;
  display: flex;
  align-items: center;
  border: 1px solid #d4d4d4;
  background-color: #f9f9f9;
}
.shelf-label {
  width: 159px;
  height: 100%;
  display: flex;
  align-items: center;
  gap: 8px;
  padding-left: 7px;
  border-right: 1px solid #d4d4d4;
  font-size: 15px;
  color: #555;
}
.shelf-label svg {
  width: 12px;
  height: 12px;
}
.shelf-pills {
  display: flex;
  gap: 2px;
  padding-left: 2px;
}
.shelf-pills .pill {
  width: 178px;
}

/* view */
.view-body {
  display: grid;
  grid-template-columns: 692px 194px;
  column-gap: 6px;
  align-items: start;
  margin-top: 1px;
}
.chart-card {
  height: 467px;
  background-color: #fff;
  border: 1px solid #d4d4d4;
  padding: 8px 0 0 10px;
}
.chart {
  width: 671px;
}
.chart-head {
  display: grid;
  grid-template-columns: 121px 550px;
  height: 22px;
  border-bottom: 1px solid #ccc;
}
.head-label {
  display: flex;
  align-items: center;
  justify-content: flex-end;
  gap: 2px;
  padding: 0 25px 1px 0;
  border-right: 1px solid #ccc;
  font-size: 15px;
  font-weight: 500;
  letter-spacing: .3px;
  color: #333;
}
.head-label svg {
  width: 8px;
  height: 12px;
}
.chart-row {
  display: grid;
  grid-template-columns: 121px 183px 184px 183px;
  height: 36.200px;
}
.row-label {
  display: flex;
  align-items: center;
  justify-content: flex-end;
  padding: 0 4px 1px 0;
  border-right: 1px solid #ccc;
  font-size: 15px;
  letter-spacing: .5px;
  color: #8b8b8b;
  white-space: nowrap;
}
.pane {
  display: flex;
  align-items: center;
  border-right: 1px solid #ccc;
}
.pane.price {
  justify-content: flex-end;
}
.pane.intercom {
  border-right: none;
}
.bar {
  height: 27px;
}
.pane.zero {
  justify-content: center;
  position: relative;
  color: #111;
  font-family: "Open Sans", "Liberation Sans", sans-serif;
  font-size: 25px;
  white-space: nowrap;
}
.pane.zero::before {
  content: "";
  position: absolute;
  left: 91px;
  top: 4px;
  width: 1px;
  height: 27px;
  background-color: #8a6a58;
}
.pane.zero span {
  position: relative;
  padding-bottom: 2px;
}
.chart-axis {
  display: grid;
  grid-template-columns: 121px 183px 184px 183px;
  height: 63px;
  border-top: 1px solid #ccc;
}
.axis-blank {
  border-right: 1px solid #ccc;
}
.axis {
  border-right: 1px solid #ccc;
  display: flex;
  flex-direction: column;
}
.ticks {
  display: flex;
  height: 33px;
  padding-top: 8px;
  font-size: 14.500px;
  color: #8b8b8b;
}
.tick {
  width: 20px;
  text-align: center;
  flex: none;
}
.ticks-price {
  gap: 22.500px;
  padding-left: 2px;
}
.ticks-price .tick:last-child {
  margin-left: -11.500px;
}
.ticks-zero {
  justify-content: center;
}
.ticks-intercom {
  gap: 30.500px;
  padding-left: 1px;
}
.ticks-intercom .tick:first-child {
  margin-right: -10px;
}
.axis-title {
  text-align: center;
  font-size: 15px;
  font-weight: 500;
  letter-spacing: .4px;
  color: #444;
  padding-top: 2px;
}

/* legends */
.legends {
  display: flex;
  flex-direction: column;
  gap: 6px;
}
.legend {
  border: 1px solid #d4d4d4;
  background-color: #fff;
}
.legend-head {
  height: 35px;
  background-color: #f9f9f9;
  padding: 8px 0 0 7px;
  font-size: 15.500px;
  color: #555;
}
.title-card { height: 80px; }
.title-card .legend-head {
  padding-top: 7px;
}
.sheet-title {
  padding: 4px 0 0 4px;
  font-size: 27px;
  font-weight: 300;
  color: #555;
}
.names-card { height: 59px; }
.swatch-row {
  display: flex;
  align-items: center;
  gap: 5px;
  padding: 2px 0 0 3px;
  font-size: 14.500px;
  color: #555;
}
.swatch {
  width: 14px;
  height: 14px;
  background-color: #9e7560;
}
.ramp-card { height: 81px; }
.ramp-wrap {
  padding: 4px 4px 0;
}
.ramp {
  height: 16px;
  border: 1px solid #a79f91;
  display: flex;
}
.ramp i {
  flex: 1;
}
.smooth {
  background: linear-gradient(to right, #f3d06a, #f8a94a 25%, #e8691f 50%, #c44c1f 75%, #9f3925);
}
.ramp-labels {
  display: flex;
  justify-content: space-between;
  font-size: 14.500px;
  color: #555;
  padding-top: 1px;
}
.highlight-card {
  height: 69px;
  background-color: #f9f9f9;
}
.highlight-box {
  margin: 3px 3px 0;
  height: 20px;
  background-color: #fff;
  border: 1px solid #cfcfcf;
  border-radius: 2px;
  display: flex;
  align-items: center;
  justify-content: space-between;
  padding: 0 3px 0 7px;
  font-size: 13.500px;
  color: #aaa;
}

/* tabs */
.tabs {
  display: flex;
  height: 37px;
  background-color: #e6e6e6;
  border-top: 1px solid #d0d0d0;
  border-bottom: 1px solid #d0d0d0;
}
.tab {
  flex: none;
  display: flex;
  align-items: center;
  gap: 5px;
  border-right: 1px solid #cfcfcf;
  color: #666;
  font-size: 15px;
  letter-spacing: .1px;
  white-space: nowrap;
  overflow: hidden;
}
.source-tab {
  width: 159px;
  padding-left: 7px;
  gap: 6px;
}
.source-tab svg {
  width: 9px;
  height: 13px;
}
.sheet {
  width: 70px;
  justify-content: center;
}
.sheet.current {
  background-color: #fff;
  color: #333;
  font-weight: 700;
}
.dash {
  width: 122px;
  padding-left: 7px;
}
.dash.wide {
  width: 124px;
}
.dash.cut {
  width: 108px;
}
.add {
  width: 32px;
  justify-content: center;
}
.add.last {
  width: 34px;
  border-right: none;
}
.add svg {
  width: 18px;
  height: 18px;
}

/* status bar */
.status {
  display: flex;
  height: 27px;
  background-color: #ebebeb;
  border-bottom: 1px solid #555;
  font-size: 13.500px;
  color: #444;
}
.status-text {
  width: 944px;
  display: flex;
  align-items: center;
  gap: 21px;
  white-space: nowrap;
  border-right: 1px solid #d0d0d0;
}
.status-cell {
  border-right: 1px solid #d0d0d0;
  display: flex;
  align-items: center;
}
.c1 { width: 156px; }
.c2 { width: 32px; }
.c3 { width: 32px; }
.c4 { width: 57px; }
.nav {
  width: 70px;
  gap: 8px;
  justify-content: center;
}
.nav svg {
  width: 8px;
  height: 8px;
}
.views {
  border-right: none;
  flex: 1;
  gap: 10px;
  padding-left: 8px;
}
.views svg {
  width: 12px;
  height: 14px;
}
```
